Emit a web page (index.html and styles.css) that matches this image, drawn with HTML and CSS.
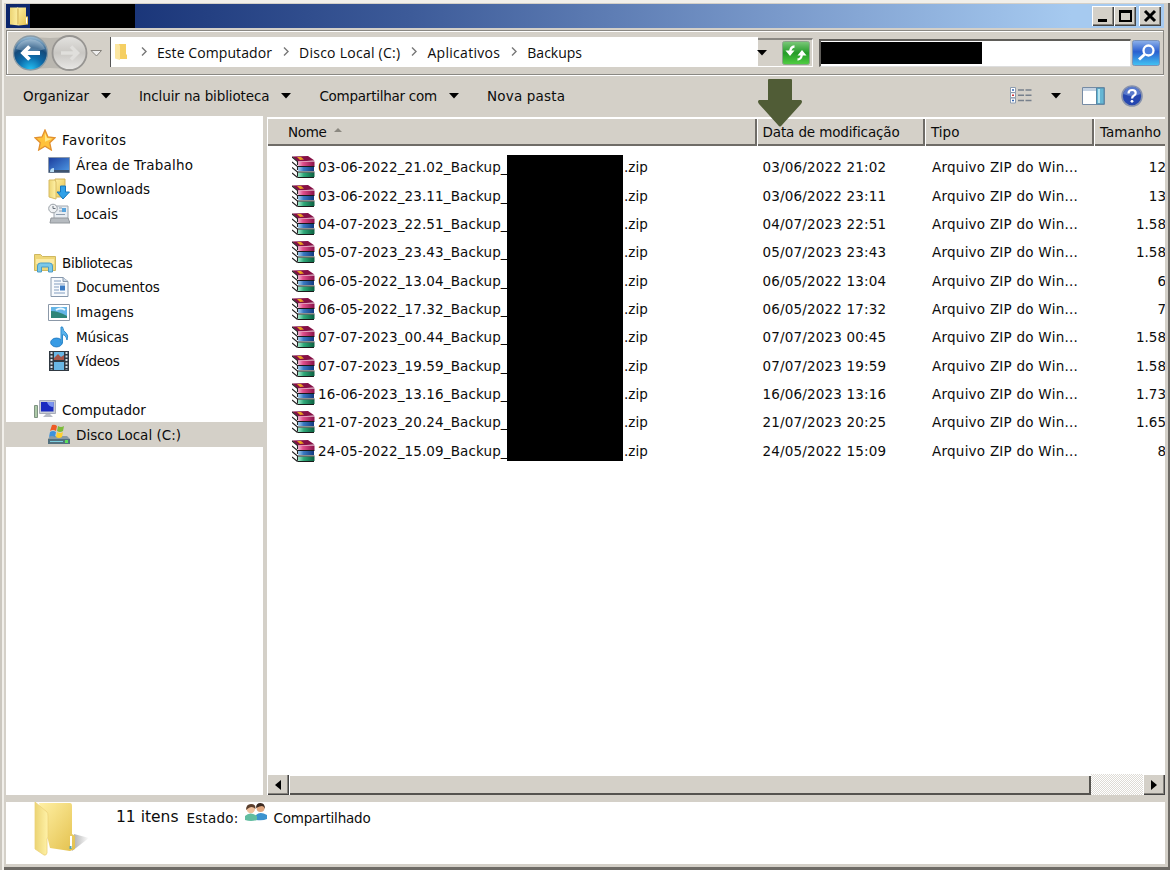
FILE: index.html
```
<!DOCTYPE html>
<html lang="pt-BR">
<head>
<meta charset="utf-8">
<title>Backups</title>
<link rel="stylesheet" href="styles.css">
</head>
<body>
<svg class="defs" width="0" height="0" aria-hidden="true">
  <defs>
    <linearGradient id="gold" x1="0" y1="0" x2="1" y2="1"><stop offset="0" stop-color="#fff0a4"/><stop offset="1" stop-color="#e3c04c"/></linearGradient>
    <linearGradient id="goldside" x1="0" y1="0" x2="1" y2="0"><stop offset="0" stop-color="#ecd474"/><stop offset="1" stop-color="#fff2a8"/></linearGradient>
    <linearGradient id="blue" x1="0" y1="0" x2="1" y2="1"><stop offset="0" stop-color="#1b3c9c"/><stop offset="1" stop-color="#4f9be6"/></linearGradient>
    <linearGradient id="magenta" x1="0" y1="0" x2="1" y2="0"><stop offset="0" stop-color="#f4b8d4"/><stop offset=".3" stop-color="#e0508c"/><stop offset="1" stop-color="#8a1048"/></linearGradient>
    <linearGradient id="navy" x1="0" y1="0" x2="1" y2="0"><stop offset="0" stop-color="#a8d4f4"/><stop offset=".35" stop-color="#3a78c0"/><stop offset="1" stop-color="#123a80"/></linearGradient>
    <linearGradient id="green" x1="0" y1="0" x2="1" y2="0"><stop offset="0" stop-color="#a4ecd0"/><stop offset=".35" stop-color="#2fa878"/><stop offset="1" stop-color="#0a6040"/></linearGradient>
    <symbol id="zip" viewBox="0 0 23 22">
      <path d="M0 1 6 5V21L0 17Z" fill="#fff"/>
      <path d="M0 0.500 16 0 22.500 4.500 6 5.500Z" fill="#861046"/><path d="M5 1h4l3 2.500-4 .5z" fill="#e8a020"/>
      <path d="M6 5.500H22.500V10H6Z" fill="url(#magenta)"/><path d="M6 11h16v4H6Z" fill="url(#navy)"/><path d="M6 16.500h16.500V21H6Z" fill="url(#green)"/>
      <path d="M0 1 5.500 5.500V9M0 6l5.500 4.500V14M0 11.500 5.500 16v4.500M0 17l5.500 4.500" fill="none" stroke="#222" stroke-width="1.100"/>
      <path d="M5.500 10.500H22.500M5.500 16H22.500M5.500 21.500H22" stroke="#1a1a1a"/>
    </symbol>
    <symbol id="caret" viewBox="0 0 10 6"><path d="M0 0h10L5 5.500z"/></symbol>
    <symbol id="chev" viewBox="0 0 6 9"><path d="M1 .5 5 4.500 1 8.500" fill="none" stroke="#777" stroke-width="1.400"/></symbol>
  </defs>
</svg>

<div class="window">
  <header class="titlebar">
    <svg class="title-icon" viewBox="0 0 20 20"><path d="M8 1h9v9h2v8l-9 1z" fill="url(#gold)"/><path d="M1 1h8l1 2v16l-9-1z" fill="url(#goldside)"/><path d="M9 2v16" stroke="#c9a544"/><path d="M17.500 11v6" stroke="#fff"/></svg>
    <span class="title-mask"></span>
    <div class="winbuttons">
      <button class="wb"><svg viewBox="0 0 16 14"><path d="M3 10h9v3H3z"/></svg></button>
      <button class="wb"><svg viewBox="0 0 16 14"><path d="M2 1h13v12H2zM4 4v7h9V4z" fill-rule="evenodd"/></svg></button>
      <button class="wb close"><svg viewBox="0 0 16 14"><path d="m3 2 10 10M13 2 3 12" stroke="#000" stroke-width="3"/></svg></button>
    </div>
  </header>

  <nav class="navbar">
    <svg class="navbuttons" viewBox="0 0 92 40">
      <defs>
        <radialGradient id="back" cx=".5" cy="1" r=".95"><stop offset="0" stop-color="#25c3f5"/><stop offset=".4" stop-color="#0d6cab"/><stop offset=".7" stop-color="#154a7a"/><stop offset="1" stop-color="#8fb4d0"/></radialGradient>
        <linearGradient id="fwd" x1="0" y1="0" x2="0" y2="1"><stop offset="0" stop-color="#e4e3e0"/><stop offset=".5" stop-color="#c9c7c3"/><stop offset="1" stop-color="#e9e8e6"/></linearGradient>
      </defs>
      <path d="M18 3q20 4 40 0v34q-20-4-40 0z" fill="#bab7b0"/>
      <circle cx="18.500" cy="20" r="17" fill="url(#back)" stroke="#8a9ba6" stroke-width="1.300"/>
      <path d="M4 16a15 13 0 0 1 29 0q-14 5-29 0" fill="#fff" opacity=".25"/>
      <path d="M28 20H11M17.500 13.500 11 20l6.500 6.500" fill="none" stroke="#fff" stroke-width="3.800"/>
      <circle cx="57.500" cy="20" r="17" fill="url(#fwd)" stroke="#979592" stroke-width="1.800"/>
      <path d="M49 20h15M59 13.500l6.500 6.500-6.500 6.500" fill="none" stroke="#e0dfdc" stroke-width="3.500"/>
      <path d="M79 17.500h10.500L84.500 23z" fill="#eee" stroke="#85827c"/>
    </svg>
    <div class="address">
      <svg class="addr-icon" viewBox="0 0 12 16"><path d="M4 0h7v10l1 1v4H4z" fill="#f5cf63"/><path d="M0 0h4l1 2v14L0 14.500z" fill="#fce6a0"/></svg>
      <svg class="chev"><use href="#chev"/></svg><span class="c1">Este Computador</span>
      <svg class="chev"><use href="#chev"/></svg><span class="c2">Disco Local (C:)</span>
      <svg class="chev"><use href="#chev"/></svg><span class="c3">Aplicativos</span>
      <svg class="chev"><use href="#chev"/></svg><span class="c4">Backups</span>
    </div>
    <div class="addr-tools">
      <svg class="caret"><use href="#caret"/></svg>
      <svg class="refresh" viewBox="0 0 28 24"><defs><linearGradient id="rg" x1="0" y1="0" x2="0" y2="1"><stop offset="0" stop-color="#7cc97a"/><stop offset=".5" stop-color="#249b28"/><stop offset="1" stop-color="#52cf43"/></linearGradient></defs><rect x=".5" y=".5" width="27" height="23" rx="2" fill="url(#rg)" stroke="#8ba58a"/><path d="M12.500 5.500q-4 0-4.500 6M15.500 18.500q4 0 4.500-6" fill="none" stroke="#fff" stroke-width="2.300"/><path d="M3.500 9.500h9L8 15zM15.500 14.500h9L20 9z" fill="#fff"/></svg>
    </div>
    <div class="search"><span class="search-mask"></span></div>
    <svg class="search-btn" viewBox="0 0 28 26"><defs><linearGradient id="sg" x1="0" y1="0" x2="0" y2="1"><stop offset="0" stop-color="#8fb2ea"/><stop offset=".45" stop-color="#2a5fd0"/><stop offset="1" stop-color="#43c4f3"/></linearGradient></defs><rect x=".5" y=".5" width="27" height="25" rx="2" fill="url(#sg)" stroke="#7a92b8"/><circle cx="16.500" cy="10.500" r="5" fill="#4b7edc" stroke="#fff" stroke-width="2.300"/><path d="m12.500 14.500-5.500 5" stroke="#fff" stroke-width="3"/></svg>
  </nav>

  <div class="toolbar">
    <span class="tool t1">Organizar</span><svg class="caret"><use href="#caret"/></svg>
    <span class="tool t2">Incluir na biblioteca</span><svg class="caret"><use href="#caret"/></svg>
    <span class="tool t3">Compartilhar com</span><svg class="caret"><use href="#caret"/></svg>
    <span class="tool t4">Nova pasta</span>
    <div class="views">
      <svg class="v-list" viewBox="0 0 22 17"><path d="M.5.500h5v5h-5zM.5 5.700h5v5h-5zM.5 11h5v5h-5z" fill="#fff" stroke="#8e9cae"/><path d="M2 3h2M2 13.500h2" stroke="#3567b5" stroke-width="1.500"/><path d="M2 8.200h2" stroke="#c33" stroke-width="1.500"/><path d="M8 3h14M8 8.200h14M8 13.500h14" stroke="#77808c" stroke-width="1.400" stroke-dasharray="6 1.500"/></svg>
      <svg class="caret v-caret"><use href="#caret"/></svg>
      <svg class="v-pane" viewBox="0 0 23 18"><path d="M.5.500h22v17H.5z" fill="#fff" stroke="#768ba4"/><path d="M1 1h13v3H1z" fill="#c4d2e2"/><path d="M14.500 1h7.500v16h-7.500z" fill="#65b6d4" stroke="#5688a5"/><path d="M16 2h2v14h-2z" fill="#b2e2ee"/></svg>
      <svg class="v-help" viewBox="0 0 22 22"><circle cx="11" cy="11" r="10" fill="#2547b0" stroke="#8792ac" stroke-width="1.600"/><path d="M2.500 9a8.600 8.600 0 0 1 17 0q-8 4-17 0" fill="#7c9be0" opacity=".6"/><path d="M7.500 8.500q0-3.500 3.600-3.500t3.600 3q0 1.800-2 2.800-1.600.9-1.600 2.700" fill="none" stroke="#fff" stroke-width="2.200"/><circle cx="11" cy="16.300" r="1.400" fill="#fff"/></svg>
    </div>
    <svg class="pointer" viewBox="0 0 44 48"><path d="M11 0h22q1 0 1 1v20h9q2 1 0 4L24 46q-2 3-4 0L1 25q-2-3 0-4h9V1q0-1 1-1z" fill="#505c36"/></svg>
  </div>

  <main class="content">
    <aside class="sidebar">
      <div class="node root"><svg viewBox="0 0 22 22"><path d="m11 1 3 7 7 .8-5.300 4.900L17.300 21 11 17.200 4.700 21l1.600-7.300L1 8.800 8 8z" fill="#ffc23a" stroke="#e2902e" stroke-width="1.300"/><path d="m11 4 2 5 5 .8-7 3z" fill="#ffe98a"/></svg><span class="s1">Favoritos</span></div>
      <div class="node"><svg viewBox="0 0 22 22"><path d="M.5 3.500h21v15H.5z" fill="url(#blue)" stroke="#8b98ab"/><path d="M1 16h20v2.500H1z" fill="#3d536f"/><path d="M2 18q0-4 4-4v4z" fill="#b7dcf4"/></svg><span class="s2">Área de Trabalho</span></div>
      <div class="node"><svg viewBox="0 0 22 22"><path d="M7 1h10v18H7z" fill="url(#gold)" stroke="#d2b25a"/><path d="M1 2h6l1 2v17l-7-2z" fill="url(#goldside)" stroke="#d8bb63"/><path d="M12.500 8h5v6h4L15 21l-6-7h3.500z" fill="#2fa0e8" stroke="#1878be"/></svg><span class="s3">Downloads</span></div>
      <div class="node"><svg viewBox="0 0 22 22"><path d="M6 3h14v14H6z" fill="#e8edf2" stroke="#a0a7ae"/><path d="M3 15h17l2 5H2z" fill="#b6bbc0" stroke="#92979c"/><circle cx="5" cy="5.500" r="4.300" fill="#eff1f3" stroke="#9ba1a7"/><path d="M5 3v2.500h2.500" fill="none" stroke="#69717b"/><path d="M11 5h3M11 8h3M8 11.500h9" stroke="#8d9cac"/><path d="M14 5h4v4h-4z" fill="#5aa5dd"/></svg><span class="s4">Locais</span></div>
      <div class="gap"></div>
      <div class="node root"><svg viewBox="0 0 22 22"><path d="M.5 2.500h6l2 2h13v14H.5z" fill="#efd778" stroke="#cfb860"/><path d="M2 7h18v5H2z" fill="#fbeaa4"/><path d="M3.500 20v-6q0-3 3-3h9q3 0 3 3v6h-4v-5h-7v5z" fill="#7cc8e8" stroke="#4b9bc5"/></svg><span class="s5">Bibliotecas</span></div>
      <div class="node"><svg viewBox="0 0 22 22"><path d="M3 1.500h12l5 4v15H3z" fill="#f7fafd" stroke="#8798ac"/><path d="M15 1.500v4h5" fill="#cfdbe8" stroke="#8798ac"/><path d="M6 5h7M6 8h11M6 11h5M6 14h5M6 17h11" stroke="#829dbf"/><path d="M12 9.500h5v5h-5z" fill="#3c7cc4"/></svg><span class="s6">Documentos</span></div>
      <div class="node"><svg viewBox="0 0 22 22"><path d="M.5 3.500h21v16H.5z" fill="#fff" stroke="#8b98a8"/><path d="M3 6h16v11H3z" fill="#64b5e7"/><path d="M3 10q7 0 16 5v2H3z" fill="#2d8578"/><path d="M8 9q5-3 9 0" stroke="#e8f7ff" stroke-width="2" fill="none"/></svg><span class="s7">Imagens</span></div>
      <div class="node"><svg viewBox="0 0 22 22"><ellipse cx="8.500" cy="16.500" rx="5.800" ry="4.400" fill="#379be5" stroke="#237dc5"/><path d="M13 17V1h1.500q.5 4 4 6.500 2 2 .5 6.500-1-5-4.500-5.500V17z" fill="#58b2ec" stroke="#2f8bcc"/></svg><span class="s8">Músicas</span></div>
      <div class="node"><svg viewBox="0 0 22 22"><path d="M1 1h20v20H1z" fill="#303942"/><path d="M6 2h10v8H6zM6 12h10v8H6z" fill="#69b7e5"/><path d="m6 8 4-4 3 3 3-2v5H6z" fill="#a65548"/><path d="M3.500 2v18M18.500 2v18" stroke="#d8e0e6" stroke-width="2" stroke-dasharray="2 1.500"/></svg><span class="s9">Vídeos</span></div>
      <div class="gap"></div>
      <div class="node root"><svg viewBox="0 0 22 22"><path d="M5.500 1.500h16v13h-16z" fill="#c9cdd6" stroke="#a8adba"/><path d="M7 3h12.500v9.500H7z" fill="#1c2cc0"/><path d="M13 3h6.500v5q-5 0-6.500-5" fill="#7b94f0"/><path d="M12 15h4l3 3H9z" fill="#b8bcc5"/><path d="M.5 6.500h3v12h-3z" fill="#adc9a8" stroke="#7f9382"/></svg><span class="s10">Computador</span></div>
      <div class="node selected"><svg viewBox="0 0 22 22"><path d="M2 12h17l3 3v5H0v-5z" fill="#8a9aa4"/><path d="M0 15h22v5H0z" fill="#52707e"/><path d="M2 17.500h13" stroke="#7ed0e0"/><path d="M17 16h3v3h-3z" fill="#5ce05c"/><path d="M4 1q3-1 5 1L8 7q-3-2-6 0z" fill="#ee5a24"/><path d="M10 2q3 2 6 0l-1 5q-3 2-6 0z" fill="#7dbb3a"/><path d="M2 8q3-2 6 0l-1 5q-3-2-6 0z" fill="#3c92dc"/><path d="M9 8q3 2 6 0l-1 5q-3 2-6 0z" fill="#ffd02e"/></svg><span class="s11">Disco Local (C:)</span></div>
    </aside>

    <section class="listing">
      <div class="cols head">
        <div class="th name"><span class="h1">Nome</span><svg class="sort" viewBox="0 0 8 4"><path d="M0 4h8L4 0z" fill="#8b8880"/></svg></div>
        <div class="th"><span class="h2">Data de modificação</span></div>
        <div class="th"><span class="h3">Tipo</span></div>
        <div class="th last"><span class="h4">Tamanho</span></div>
      </div>
      <div class="rows">
        <div class="cols row"><div class="file"><svg><use href="#zip"/></svg><span class="fn">03-06-2022_21.02_Backup_</span><span class="ext">.zip</span></div><span class="date">03/06/2022 21:02</span><span class="type">Arquivo ZIP do Win...</span><span class="size">12</span></div>
        <div class="cols row"><div class="file"><svg><use href="#zip"/></svg><span class="fn">03-06-2022_23.11_Backup_</span><span class="ext">.zip</span></div><span class="date">03/06/2022 23:11</span><span class="type">Arquivo ZIP do Win...</span><span class="size">13</span></div>
        <div class="cols row"><div class="file"><svg><use href="#zip"/></svg><span class="fn">04-07-2023_22.51_Backup_</span><span class="ext">.zip</span></div><span class="date">04/07/2023 22:51</span><span class="type">Arquivo ZIP do Win...</span><span class="size">1.58</span></div>
        <div class="cols row"><div class="file"><svg><use href="#zip"/></svg><span class="fn">05-07-2023_23.43_Backup_</span><span class="ext">.zip</span></div><span class="date">05/07/2023 23:43</span><span class="type">Arquivo ZIP do Win...</span><span class="size">1.58</span></div>
        <div class="cols row"><div class="file"><svg><use href="#zip"/></svg><span class="fn">06-05-2022_13.04_Backup_</span><span class="ext">.zip</span></div><span class="date">06/05/2022 13:04</span><span class="type">Arquivo ZIP do Win...</span><span class="size">6</span></div>
        <div class="cols row"><div class="file"><svg><use href="#zip"/></svg><span class="fn">06-05-2022_17.32_Backup_</span><span class="ext">.zip</span></div><span class="date">06/05/2022 17:32</span><span class="type">Arquivo ZIP do Win...</span><span class="size">7</span></div>
        <div class="cols row"><div class="file"><svg><use href="#zip"/></svg><span class="fn">07-07-2023_00.44_Backup_</span><span class="ext">.zip</span></div><span class="date">07/07/2023 00:45</span><span class="type">Arquivo ZIP do Win...</span><span class="size">1.58</span></div>
        <div class="cols row"><div class="file"><svg><use href="#zip"/></svg><span class="fn">07-07-2023_19.59_Backup_</span><span class="ext">.zip</span></div><span class="date">07/07/2023 19:59</span><span class="type">Arquivo ZIP do Win...</span><span class="size">1.58</span></div>
        <div class="cols row"><div class="file"><svg><use href="#zip"/></svg><span class="fn">16-06-2023_13.16_Backup_</span><span class="ext">.zip</span></div><span class="date">16/06/2023 13:16</span><span class="type">Arquivo ZIP do Win...</span><span class="size">1.73</span></div>
        <div class="cols row"><div class="file"><svg><use href="#zip"/></svg><span class="fn">21-07-2023_20.24_Backup_</span><span class="ext">.zip</span></div><span class="date">21/07/2023 20:25</span><span class="type">Arquivo ZIP do Win...</span><span class="size">1.65</span></div>
        <div class="cols row"><div class="file"><svg><use href="#zip"/></svg><span class="fn">24-05-2022_15.09_Backup_</span><span class="ext">.zip</span></div><span class="date">24/05/2022 15:09</span><span class="type">Arquivo ZIP do Win...</span><span class="size">8</span></div>
        <div class="mask"></div>
      </div>
      <div class="hscroll">
        <button class="sb"><svg viewBox="0 0 6 10"><path d="M6 0v10L0 5z"/></svg></button>
        <div class="thumb"></div><div class="track"></div>
        <button class="sb"><svg viewBox="0 0 6 10"><path d="M0 0v10l6-5z"/></svg></button>
      </div>
    </section>
  </main>

  <footer class="status">
    <svg class="bigfolder" viewBox="0 0 56 56"><defs><linearGradient id="sh" x1="0" y1="0" x2="1" y2="0"><stop offset="0" stop-color="#aaa"/><stop offset="1" stop-color="#fff"/></linearGradient></defs><path d="m38 49 17-13-15-4z" fill="url(#sh)"/><path d="M5 1h31q2 0 2 3v28l3 2v13l-5 2-20-3z" fill="url(#gold)"/><path d="m1 0 12 10q1 1 1 4v21l-1 2v14q-1 3-3 2L1 47z" fill="url(#goldside)" stroke="#ecd27a" stroke-width=".8"/><path d="M37 34v12" stroke="#fff" stroke-width="2"/><path d="M36.500 44v3" stroke="#57a5b5" stroke-width="2"/></svg>
    <span class="f1">11 itens</span><span class="f2">Estado:</span>
    <svg class="people" viewBox="0 0 22 18"><circle cx="15.500" cy="5" r="4" fill="#e0a67e"/><path d="M11 5q0-5 4.500-5t4.500 6q-1-3-3-3t-6 2" fill="#3b2a22"/><path d="M11 17V12q4-4 11 0v4q-4 2-11 1" fill="#3c93cf"/><circle cx="5.800" cy="6" r="4.200" fill="#efc09c"/><path d="M1 7q0-6 5-6t4.500 5q-2-2-4-2T1 7" fill="#5b3f2d"/><path d="M0 17v-4q5-5 12 0v4q-6 2-12 0" fill="#62bda0"/></svg>
    <span class="f3">Compartilhado</span>
  </footer>
</div>
</body>
</html>
```
FILE: styles.css
```
* { box-sizing: border-box; }
body { margin: 0; background: #d4d0c8; font-family: "DejaVu Sans", sans-serif; font-size: 13.5px; color: #0c0c0c; }
svg { display: block; flex: none; }
.defs { position: absolute; }
button { padding: 0; margin: 0; font: inherit; }
span { white-space: nowrap; }

.window { width: 1170px; height: 870px; display: grid; grid-template-rows: 24px 48px 39px 680px 69px; padding: 4px 5px 4px 6px; background: #d4d0c8; box-shadow: inset 2px 0 0 #cbc7bf, inset 4px 3px 0 #f1efea, inset -2px -3px 0 #6d6a65; overflow: hidden; }

.titlebar { display: flex; align-items: center; background: linear-gradient(90deg, #0b256b, #3d5b99 35%, #7a9acb 67%, #a6caf0 92%); padding-left: 3px; width: 1158px; }
.title-icon { width: 20px; height: 21px; }
.title-mask { width: 105px; height: 24px; background: #000; margin-left: 1px; }
.winbuttons { display: flex; margin-left: auto; padding-right: 3px; }
.wb, .sb { background: #d4d0c8; border: 0; box-shadow: inset 1px 1px #fff, inset -1px -1px #444, inset -2px -2px #87847e; }
.wb { width: 22px; height: 20px; padding: 3px; }
.wb svg { width: 16px; height: 14px; }
.close { margin-left: 3px; }

.navbar { display: flex; align-items: center; margin-top: 2px; height: 45px; width: 1158px; border: 1px solid #8a8883; box-shadow: 0 1px #fff, inset 1px 1px #fff; padding-left: 5px; }
.navbuttons { width: 92px; height: 40px; }
.address { display: flex; align-items: center; width: 648px; height: 30px; background: #fff; border-left: 1px solid #555; margin-left: 6px; margin-bottom: 1px; padding: 1px 0 0 4px; font-family: "Open Sans", sans-serif; font-size: 14px; }
.addr-icon { width: 12px; height: 16px; margin: 0 14px 2px 0; }
.chev { width: 6px; height: 9px; margin-bottom: 2px; }
.c1, .c2, .c3, .c4 { margin-left: 10px; margin-right: 11px; }
.c1 { letter-spacing: .08px; }
.c2 { letter-spacing: .26px; }
.c3 { letter-spacing: .3px; }
.caret { width: 10px; height: 6px; }
.addr-tools { display: flex; align-items: center; width: 55px; height: 29px; border-top: 2px solid #8a8883; border-bottom: 1px solid #fff; border-right: 1px solid #fff; }
.addr-tools .caret { margin-left: -1px; }
.refresh { width: 28px; height: 24px; margin-left: 15px; }
.search { width: 312px; height: 28px; background: #fff; border: 2px solid #5f5d59; border-right: 1px solid #ddd; border-bottom: 1px solid #ddd; margin-left: 6px; display: flex; }
.search-mask { width: 161px; height: 22px; background: #000; margin-top: 1px; }
.search-btn { width: 28px; height: 26px; margin-left: 1px; }

.toolbar { position: relative; display: flex; align-items: center; padding-left: 17px; height: 39px; }
.tool + .caret { margin-left: 12px; }
.caret + .tool { margin-left: 28px; }
.t2 { letter-spacing: -.12px; }
.t3 { letter-spacing: -.25px; }
.t4 { letter-spacing: .2px; }
.views { display: flex; align-items: center; margin-left: auto; padding-right: 22px; }
.v-list { width: 22px; height: 17px; }
.v-caret { margin: 0 21px 0 19px; }
.v-pane { width: 23px; height: 18px; margin-right: 16px; }
.v-help { width: 22px; height: 22px; }
.pointer { position: absolute; left: 752px; top: 3px; width: 44px; height: 48px; z-index: 2; }

.content { display: grid; grid-template-columns: 257px 898px; grid-template-rows: 679px; column-gap: 4px; margin-top: 1px; }
.sidebar { background: #fff; padding-top: 12px; }
.node { display: flex; align-items: center; height: 24.54px; padding-left: 42px; }
.node svg { width: 22px; height: 22px; margin-right: 6px; }
.root { padding-left: 28px; }
.gap { height: 24.54px; }
.selected { background: #d4d0c8; }
.s1 { letter-spacing: .4px; }
.s2 { letter-spacing: .2px; }
.s5 { letter-spacing: -.3px; }
.s6, .s8 { letter-spacing: -.15px; }
.s9 { letter-spacing: -.25px; }

.listing { display: flex; flex-direction: column; background: #fff; overflow: hidden; }
.cols { display: grid; grid-template-columns: 489.500px 168.500px 169px 71px; }
.head { height: 30px; flex: none; border-top: 1px solid #d4d0c8; }
.th { display: flex; align-items: center; background: #d4d0c8; padding-left: 6px; box-shadow: inset 1px 2px #fff, inset -2px 0 #6f6c67, inset 0 -2px #6f6c67; }
.name { padding-left: 21px; }
.last { box-shadow: inset 1px 2px #fff, inset 0 -2px #6f6c67; }
.h1 { letter-spacing: -.3px; }
.h2 { letter-spacing: -.13px; }
.sort { width: 8px; height: 4px; margin: 0 0 3px 7px; }
.rows { position: relative; padding-top: 7px; flex: 1; }
.row { height: 28.350px; align-items: center; }
.file { display: flex; align-items: center; padding-left: 25px; }
.file svg { width: 23px; height: 22px; margin-right: 3px; }
.fn { width: 306px; letter-spacing: .12px; }
.date, .type { padding-left: 6px; letter-spacing: .17px; }
.type { padding-left: 7px; letter-spacing: .24px; }
.size { justify-self: end; margin-right: -1px; }
.mask { position: absolute; left: 240px; top: 9px; width: 116px; height: 306px; background: #000; }

.hscroll { display: flex; height: 21px; flex: none; background: #d4d0c8; }
.sb { width: 22px; height: 21px; display: grid; place-items: center; }
.sb svg { width: 6px; height: 10px; }
.thumb { width: 802px; height: 21px; background: #d4d0c8; box-shadow: inset 1px 2px #fff, inset -2px -2px #55534f; }
.track { flex: 1; height: 21px; background: repeating-conic-gradient(#fff 0 25%, #dedbd5 0 50%) 0 0 / 2px 2px; }

.status { display: flex; align-items: flex-start; background: #fff; margin-top: 7px; height: 62px; width: 1159px; padding-left: 28px; }
.bigfolder { width: 56px; height: 56px; }
.f1 { font-size: 15.5px; margin: 6px 8px 0 26px; }
.f2, .f3 { margin-top: 8px; }
.f2 { letter-spacing: .2px; }
.f3 { letter-spacing: -.2px; }
.people { width: 22px; height: 18px; margin: 1px 6px 0 7px; }
```
